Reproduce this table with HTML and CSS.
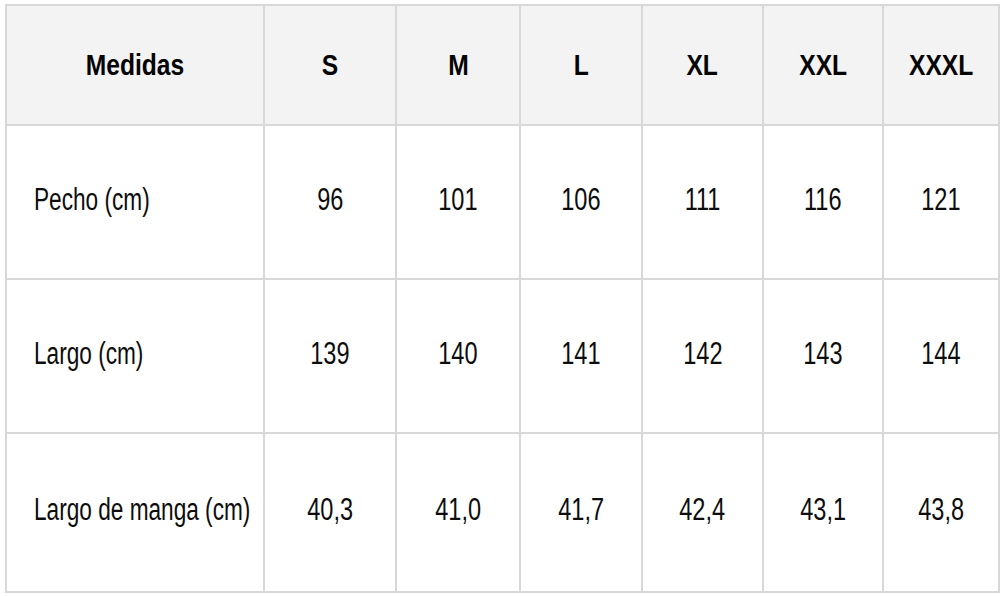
FILE: index.html
```html
<!DOCTYPE html>
<html lang="es">
<head>
<meta charset="utf-8">
<title>Medidas</title>
<link rel="stylesheet" href="styles.css">
</head>
<body>
<table class="sizes">
  <colgroup>
    <col class="c0"><col class="c1"><col class="c2"><col class="c3"><col class="c4"><col class="c5"><col class="c6">
  </colgroup>
  <thead>
    <tr class="head">
      <th><span class="t">Medidas</span></th><th><span class="t">S</span></th><th><span class="t">M</span></th><th><span class="t">L</span></th><th><span class="t">XL</span></th><th><span class="t">XXL</span></th><th><span class="t">XXXL</span></th>
    </tr>
  </thead>
  <tbody>
    <tr class="r1">
      <td class="label"><span class="t">Pecho (cm)</span></td><td><span class="t">96</span></td><td><span class="t">101</span></td><td><span class="t">106</span></td><td><span class="t">111</span></td><td><span class="t">116</span></td><td><span class="t">121</span></td>
    </tr>
    <tr class="r2">
      <td class="label"><span class="t">Largo (cm)</span></td><td><span class="t">139</span></td><td><span class="t">140</span></td><td><span class="t">141</span></td><td><span class="t">142</span></td><td><span class="t">143</span></td><td><span class="t">144</span></td>
    </tr>
    <tr class="r3">
      <td class="label"><span class="t">Largo de manga (cm)</span></td><td><span class="t">40,3</span></td><td><span class="t">41,0</span></td><td><span class="t">41,7</span></td><td><span class="t">42,4</span></td><td><span class="t">43,1</span></td><td><span class="t">43,8</span></td>
    </tr>
  </tbody>
</table>
</body>
</html>
```
FILE: styles.css
```css
html, body {
  margin: 0;
  padding: 0;
  background: #ffffff;
}
body {
  padding: 4px 0 0 5px;
  font-family: "Liberation Sans", Arial, sans-serif;
  color: #0d0d0d;
}
.sizes {
  border-collapse: collapse;
  table-layout: fixed;
  width: 993px;
}
.c0 { width: 258px; }
.c1 { width: 132px; }
.c2 { width: 124px; }
.c3 { width: 122px; }
.c4 { width: 121px; }
.c5 { width: 120px; }
.c6 { width: 116px; }
.sizes th, .sizes td {
  border: 2px solid #d8d8d8;
  text-align: center;
  vertical-align: middle;
  padding: 0;
  font-size: 31px;
  line-height: 1;
  white-space: nowrap;
}
.t {
  display: inline-block;
  transform: scaleX(0.76);
  transform-origin: center;
}
.sizes th {
  background: #f3f3f3;
  font-weight: 700;
  font-size: 30px;
  color: #050505;
}
.sizes th .t {
  transform: scaleX(0.82);
}
.head { height: 120px; }
.r1, .r2 { height: 154px; }
.r3 { height: 159px; }
.sizes td.label {
  text-align: left;
  padding-left: 27px;
}
.sizes td.label .t {
  transform-origin: left center;
  transform: scaleX(0.73);
}
.sizes td .t {
  position: relative;
  top: -3px;
}
```
